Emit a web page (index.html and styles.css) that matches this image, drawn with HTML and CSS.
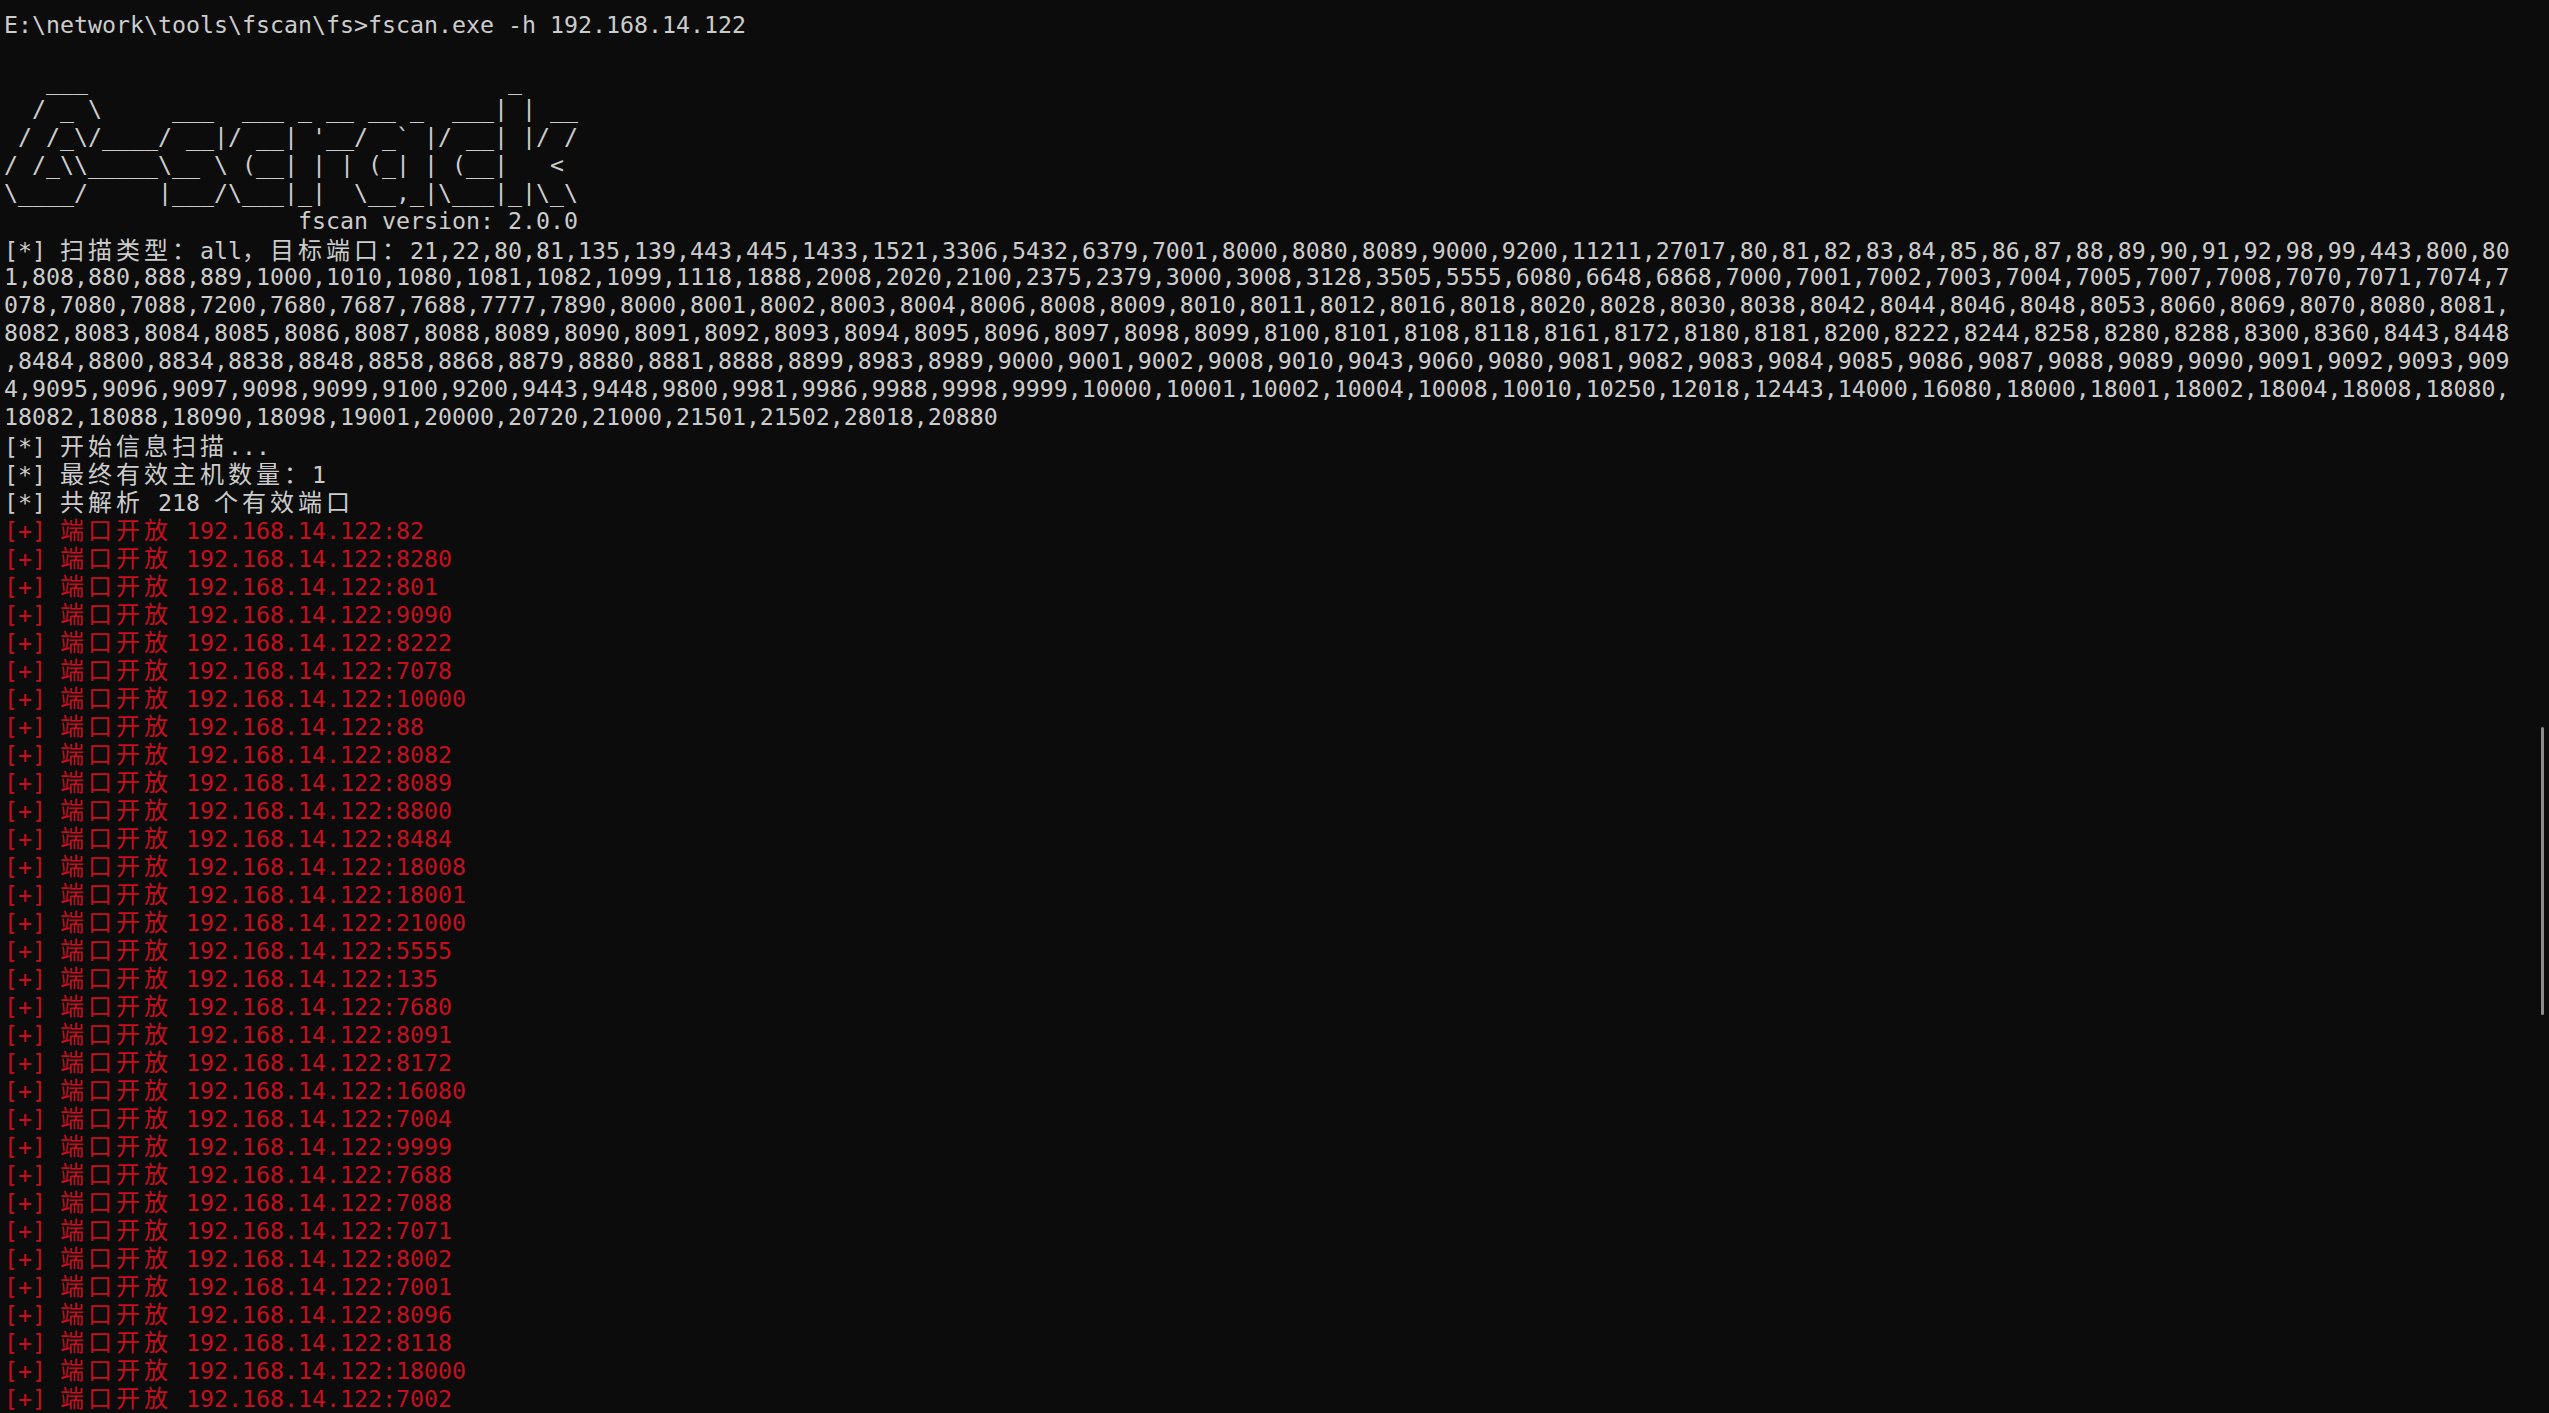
FILE: index.html
```
<!DOCTYPE html>
<html lang="zh-CN">
<head>
    <meta charset="UTF-8">
    <title>fscan</title>
    <link rel="stylesheet" href="styles.css">
</head>
<body>
    <div class="terminal">
        <div class="row">E:\network\tools\fscan\fs&gt;fscan.exe -h 192.168.14.122</div>
        <div class="row"></div>
        <div class="row">   ___                              _</div>
        <div class="row">  / _ \     ___  ___ _ __ __ _  ___| | __</div>
        <div class="row"> / /_\/____/ __|/ __| '__/ _` |/ __| |/ /</div>
        <div class="row">/ /_\\_____\__ \ (__| | | (_| | (__|   &lt;</div>
        <div class="row">\____/     |___/\___|_|  \__,_|\___|_|\_\</div>
        <div class="row">                     fscan version: 2.0.0</div>
        <div class="row">[*] <span class="cjk">扫描类型：</span>all<span class="cjk">，目标端口：</span>21,22,80,81,135,139,443,445,1433,1521,3306,5432,6379,7001,8000,8080,8089,9000,9200,11211,27017,80,81,82,83,84,85,86,87,88,89,90,91,92,98,99,443,800,80</div>
        <div class="row">1,808,880,888,889,1000,1010,1080,1081,1082,1099,1118,1888,2008,2020,2100,2375,2379,3000,3008,3128,3505,5555,6080,6648,6868,7000,7001,7002,7003,7004,7005,7007,7008,7070,7071,7074,7</div>
        <div class="row">078,7080,7088,7200,7680,7687,7688,7777,7890,8000,8001,8002,8003,8004,8006,8008,8009,8010,8011,8012,8016,8018,8020,8028,8030,8038,8042,8044,8046,8048,8053,8060,8069,8070,8080,8081,</div>
        <div class="row">8082,8083,8084,8085,8086,8087,8088,8089,8090,8091,8092,8093,8094,8095,8096,8097,8098,8099,8100,8101,8108,8118,8161,8172,8180,8181,8200,8222,8244,8258,8280,8288,8300,8360,8443,8448</div>
        <div class="row">,8484,8800,8834,8838,8848,8858,8868,8879,8880,8881,8888,8899,8983,8989,9000,9001,9002,9008,9010,9043,9060,9080,9081,9082,9083,9084,9085,9086,9087,9088,9089,9090,9091,9092,9093,909</div>
        <div class="row">4,9095,9096,9097,9098,9099,9100,9200,9443,9448,9800,9981,9986,9988,9998,9999,10000,10001,10002,10004,10008,10010,10250,12018,12443,14000,16080,18000,18001,18002,18004,18008,18080,</div>
        <div class="row">18082,18088,18090,18098,19001,20000,20720,21000,21501,21502,28018,20880</div>
        <div class="row">[*] <span class="cjk">开始信息扫描</span>...</div>
        <div class="row">[*] <span class="cjk">最终有效主机数量：</span>1</div>
        <div class="row">[*] <span class="cjk">共解析</span> 218 <span class="cjk">个有效端口</span></div>
        <div class="row red">[+] <span class="cjk">端口开放</span> 192.168.14.122:82</div>
        <div class="row red">[+] <span class="cjk">端口开放</span> 192.168.14.122:8280</div>
        <div class="row red">[+] <span class="cjk">端口开放</span> 192.168.14.122:801</div>
        <div class="row red">[+] <span class="cjk">端口开放</span> 192.168.14.122:9090</div>
        <div class="row red">[+] <span class="cjk">端口开放</span> 192.168.14.122:8222</div>
        <div class="row red">[+] <span class="cjk">端口开放</span> 192.168.14.122:7078</div>
        <div class="row red">[+] <span class="cjk">端口开放</span> 192.168.14.122:10000</div>
        <div class="row red">[+] <span class="cjk">端口开放</span> 192.168.14.122:88</div>
        <div class="row red">[+] <span class="cjk">端口开放</span> 192.168.14.122:8082</div>
        <div class="row red">[+] <span class="cjk">端口开放</span> 192.168.14.122:8089</div>
        <div class="row red">[+] <span class="cjk">端口开放</span> 192.168.14.122:8800</div>
        <div class="row red">[+] <span class="cjk">端口开放</span> 192.168.14.122:8484</div>
        <div class="row red">[+] <span class="cjk">端口开放</span> 192.168.14.122:18008</div>
        <div class="row red">[+] <span class="cjk">端口开放</span> 192.168.14.122:18001</div>
        <div class="row red">[+] <span class="cjk">端口开放</span> 192.168.14.122:21000</div>
        <div class="row red">[+] <span class="cjk">端口开放</span> 192.168.14.122:5555</div>
        <div class="row red">[+] <span class="cjk">端口开放</span> 192.168.14.122:135</div>
        <div class="row red">[+] <span class="cjk">端口开放</span> 192.168.14.122:7680</div>
        <div class="row red">[+] <span class="cjk">端口开放</span> 192.168.14.122:8091</div>
        <div class="row red">[+] <span class="cjk">端口开放</span> 192.168.14.122:8172</div>
        <div class="row red">[+] <span class="cjk">端口开放</span> 192.168.14.122:16080</div>
        <div class="row red">[+] <span class="cjk">端口开放</span> 192.168.14.122:7004</div>
        <div class="row red">[+] <span class="cjk">端口开放</span> 192.168.14.122:9999</div>
        <div class="row red">[+] <span class="cjk">端口开放</span> 192.168.14.122:7688</div>
        <div class="row red">[+] <span class="cjk">端口开放</span> 192.168.14.122:7088</div>
        <div class="row red">[+] <span class="cjk">端口开放</span> 192.168.14.122:7071</div>
        <div class="row red">[+] <span class="cjk">端口开放</span> 192.168.14.122:8002</div>
        <div class="row red">[+] <span class="cjk">端口开放</span> 192.168.14.122:7001</div>
        <div class="row red">[+] <span class="cjk">端口开放</span> 192.168.14.122:8096</div>
        <div class="row red">[+] <span class="cjk">端口开放</span> 192.168.14.122:8118</div>
        <div class="row red">[+] <span class="cjk">端口开放</span> 192.168.14.122:18000</div>
        <div class="row red">[+] <span class="cjk">端口开放</span> 192.168.14.122:7002</div>
    </div>
    <div class="scrollbar"></div>
</body>
</html>
```

FILE: styles.css
```
/* Terminal window */
body {
    margin: 0;
    padding: 0;
    background-color: #0c0c0c;
    overflow: hidden;
}

.terminal {
    padding: 11px 0 0 4px;
    font-family: "DejaVu Sans Mono", "Noto Sans CJK SC", monospace;
    font-size: 23.25px;
    color: #cccccc;
}

.row {
    height: 28px;
    line-height: 28px;
    white-space: pre;
}

.row.red {
    color: #c50f1f;
}

/* wide glyphs take two cells */
.cjk {
    font-family: "Noto Sans CJK SC", sans-serif;
    font-size: 24px;
    letter-spacing: 4px;
    line-height: 28px;
}

/* scroll thumb on the right edge */
.scrollbar {
    position: absolute;
    top: 727px;
    left: 2541px;
    width: 3px;
    height: 288px;
    border-radius: 2px;
    background-color: #8a8a8a;
}
```
